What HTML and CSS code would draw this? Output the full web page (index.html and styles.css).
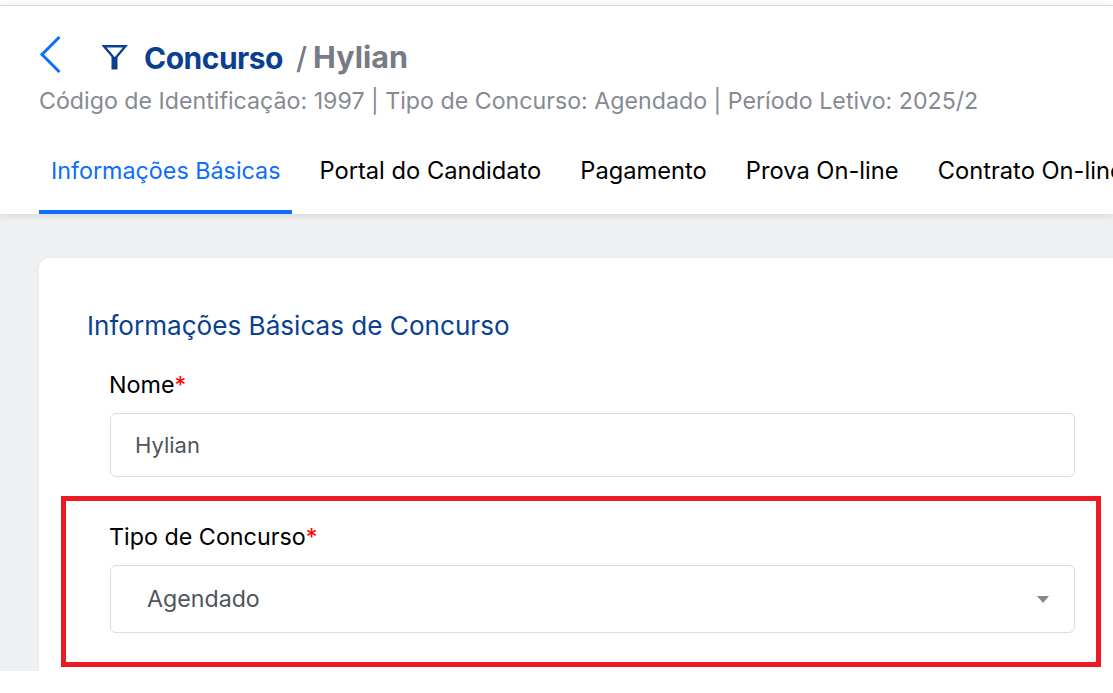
FILE: index.html
```html
<!DOCTYPE html>
<html>
	<head>
		<meta name="viewport" content="width=device-width, initial-scale=1.0" />
		<title>Concurso</title>
		<link rel="stylesheet" href="styles.css">
	</head>
	<body>
		<div class="page">
			<div class="top-strip"></div>
			<header class="top">
				<div class="title-row">
					<svg class="back-icon" width="22" height="37" viewBox="0 0 22 37"><path d="M20.500 1 3 18.500 20.500 36" fill="none" stroke="#0d6efd" stroke-width="3"/></svg>
					<svg class="filter-icon" width="26" height="25" viewBox="0 0 26 25"><path d="M2 1.200H23.500L12.750 14Z" fill="none" stroke="#0b3f92" stroke-width="2.400"/><rect x="9.500" y="12" width="6" height="12.500" fill="#0b3f92"/></svg>
					<h1 class="title">Concurso</h1>
					<span class="slash">/</span>
					<span class="subtitle">Hylian</span>
				</div>
				<p class="meta">Código de Identificação: 1997 | Tipo de Concurso: Agendado | Período Letivo: 2025/2</p>
				<nav class="tabs">
					<a class="tab active">Informações Básicas</a>
					<a class="tab">Portal do Candidato</a>
					<a class="tab">Pagamento</a>
					<a class="tab">Prova On-line</a>
					<a class="tab">Contrato On-line</a>
				</nav>
			</header>

			<main class="content">
				<section class="card">
					<h2 class="card-title">Informações Básicas de Concurso</h2>
					<div class="field">
						<label class="field-label">Nome<span class="req">*</span></label>
						<div class="input">Hylian</div>
					</div>
					<div class="field">
						<label class="field-label">Tipo de Concurso<span class="req">*</span></label>
						<div class="input select">
							<span>Agendado</span>
							<span class="caret"></span>
						</div>
					</div>
				</section>
			</main>

			<!-- annotation over the screenshot -->
			<div class="highlight"></div>
		</div>
	</body>
</html>
```

FILE: styles.css
```css
* {
	box-sizing: border-box;
}

html,
body {
	margin: 0;
	background-color: #fff;
}

body {
	font-family: "Inter", "Liberation Sans", sans-serif;
}

.page {
	position: relative;
	height: 671px;
	overflow: hidden;
	display: flex;
	flex-direction: column;
	background-color: #eff0f2;
}

.top-strip {
	height: 5px;
	flex-shrink: 0;
	background-color: #fff;
}

.top {
	height: 209px;
	flex-shrink: 0;
	padding: 27px 0 0 39px;
	background-color: #fff;
	border-top: 1px solid #dcdcdc;
	box-shadow: 0 1px 8px rgba(0, 0, 0, 0.12);
	overflow: hidden;
}

.title-row {
	display: flex;
	align-items: center;
	height: 50px;
}

.back-icon {
	margin-right: 41px;
	margin-bottom: 8px;
}

.filter-icon {
	margin-right: 16px;
	margin-bottom: 2px;
}

.title {
	margin: 0 13px 0 0;
	font-size: 30px;
	font-weight: 700;
	letter-spacing: -0.5px;
	color: #0b3f92;
}

.slash {
	margin-right: 6px;
	font-size: 30px;
	font-weight: 500;
	color: #767b85;
}

.subtitle {
	font-size: 30.5px;
	font-weight: 700;
	line-height: 48px;
	margin-bottom: 2px;
	color: #767b85;
}

.meta {
	margin: 2px 0 0;
	font-size: 23.2px;
	line-height: 32px;
	color: #868a93;
	white-space: nowrap;
}

.tabs {
	display: flex;
	margin-top: 25px;
	white-space: nowrap;
}

.tab {
	padding: 15px 12px 26px;
	margin-right: 15px;
	font-size: 23.7px;
	line-height: 27px;
	color: #000;
	border-bottom: 4px solid transparent;
}

.tab.active {
	font-size: 23.3px;
	color: #0d6efd;
	border-bottom-color: #0d6efd;
}

.content {
	padding: 44px 0 0 39px;
}

.card {
	height: 500px;
	padding: 53px 38px 0 48px;
	background-color: #fff;
	border-radius: 10px 0 0 10px;
	box-shadow: 0 0 4px rgba(0, 0, 0, 0.04);
}

.card-title {
	margin: 0 0 30px;
	font-size: 26.1px;
	line-height: 30px;
	font-weight: 400;
	color: #0b3f92;
}

.field {
	margin: 0 0 46px 23px;
}

.field-label {
	display: block;
	height: 28px;
	margin: 0 0 14px -1px;
	font-size: 23.3px;
	line-height: 28px;
	color: #000;
}

.req {
	color: #f00;
}

.input {
	display: flex;
	align-items: center;
	height: 64px;
	padding-left: 24px;
	font-size: 22px;
	color: #50555c;
	border: 1px solid #dcdcdc;
	border-radius: 6px;
}

.select {
	height: 68px;
	padding: 0 25px 0 36px;
	justify-content: space-between;
	font-size: 23.2px;
}

.caret {
	width: 0;
	height: 0;
	border-left: 6px solid transparent;
	border-right: 6px solid transparent;
	border-top: 7px solid #888;
}

.highlight {
	position: absolute;
	left: 61px;
	top: 496px;
	width: 1040px;
	height: 171px;
	border: 5px solid #ed1c24;
}
```
